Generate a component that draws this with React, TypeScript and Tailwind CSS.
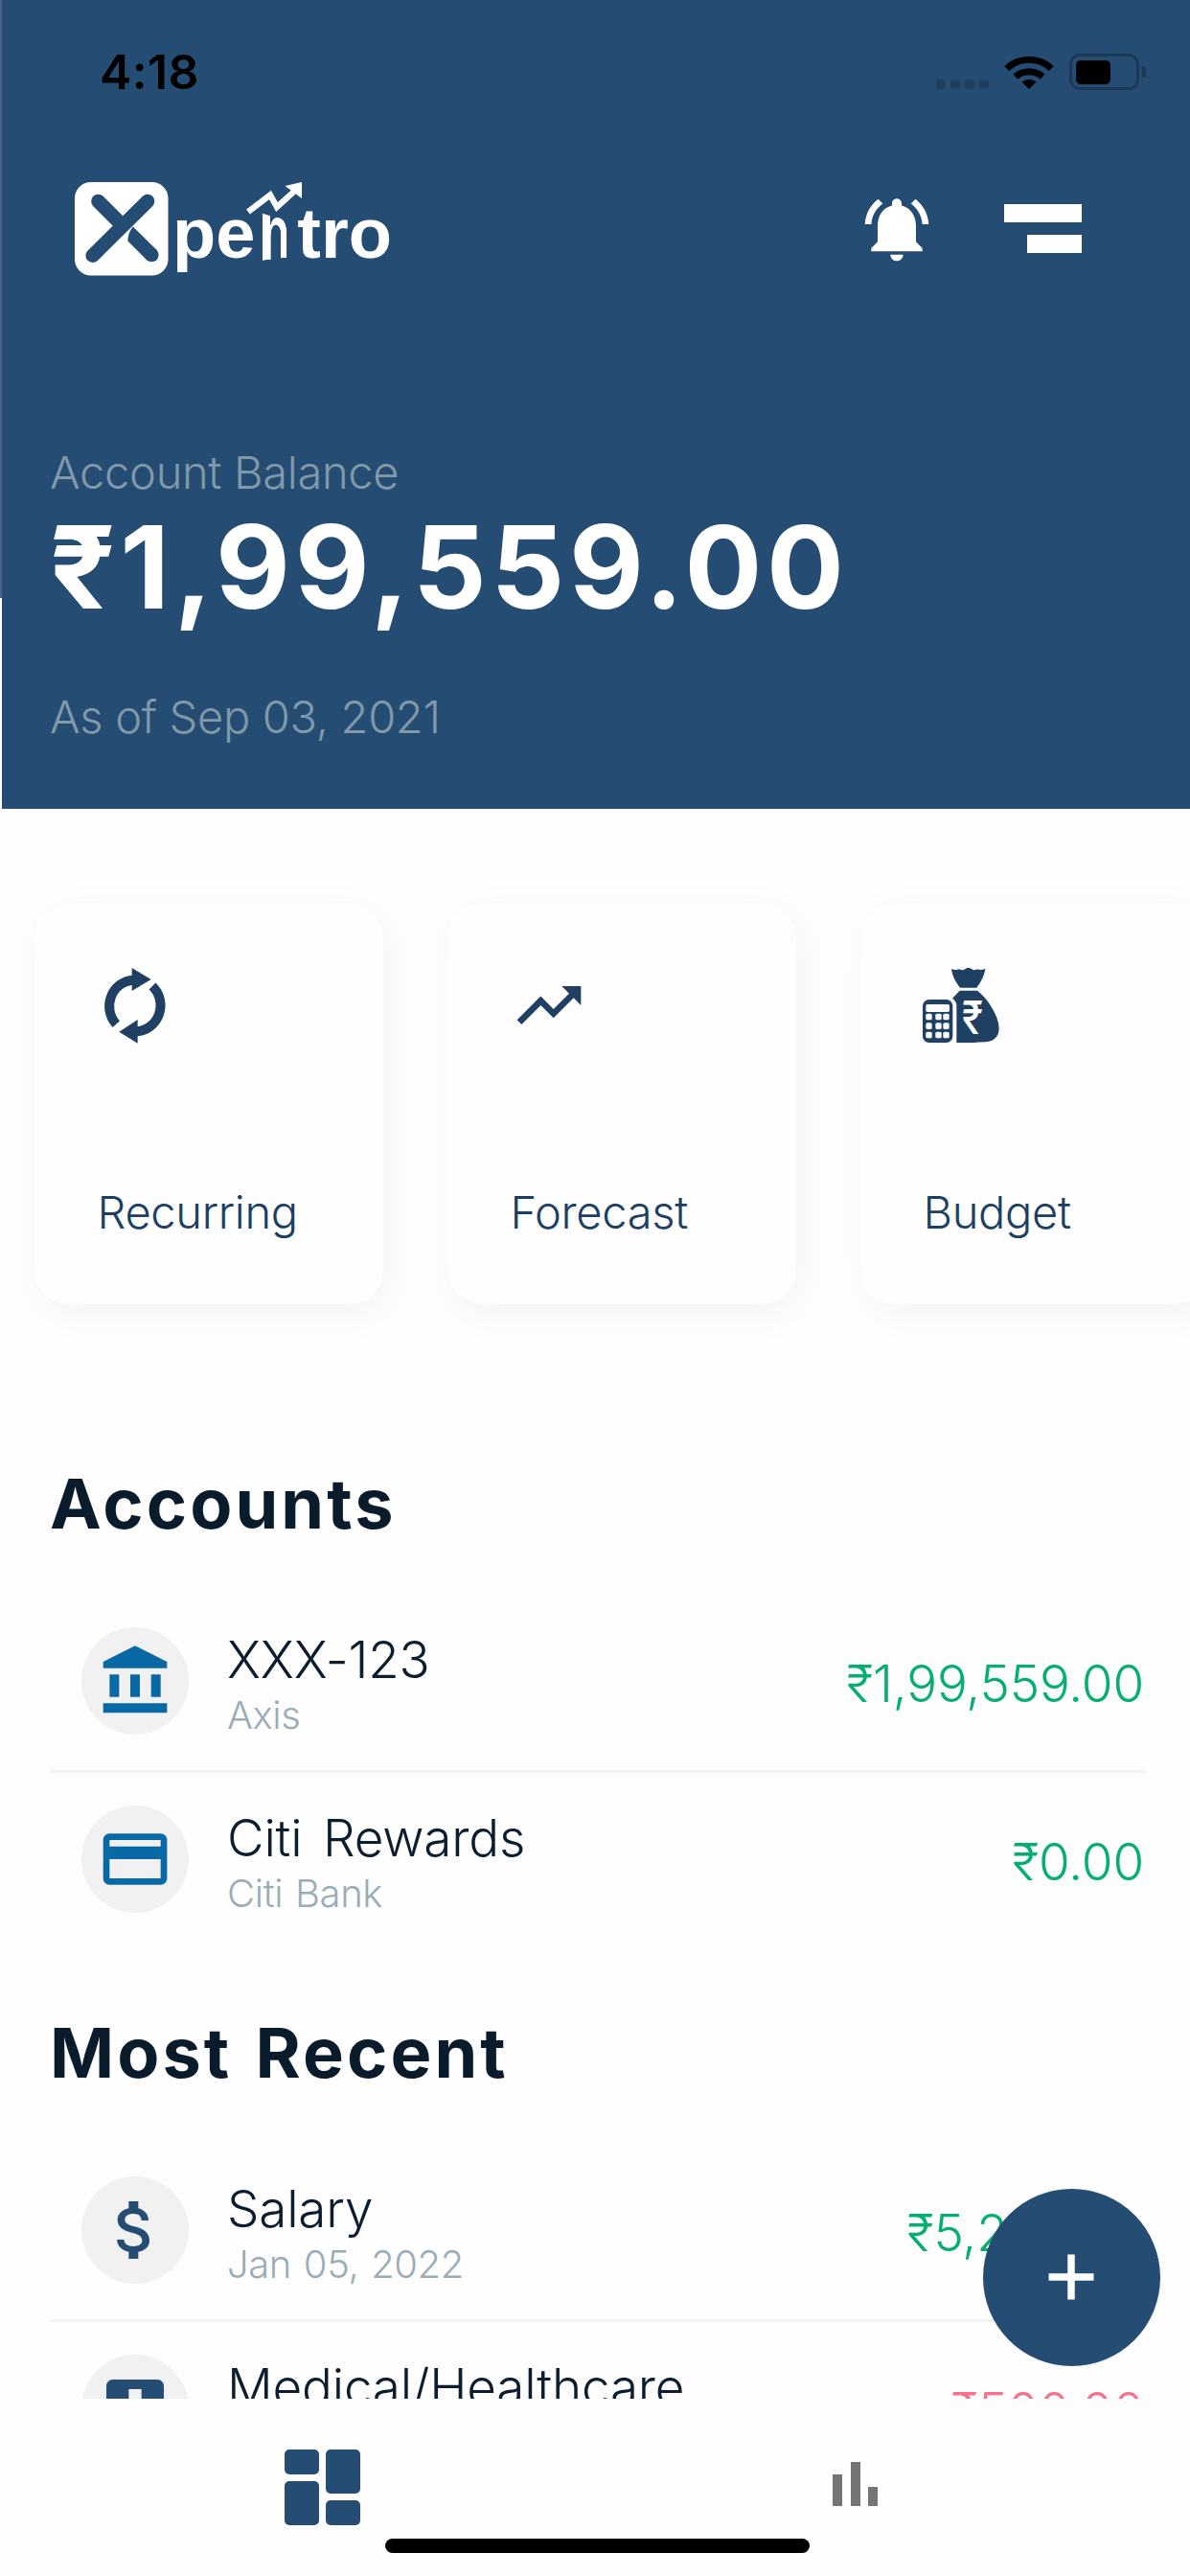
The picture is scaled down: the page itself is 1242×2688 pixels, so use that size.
import type { ReactNode } from "react";

const PATHS = {
  bell: "M7.58 4.08L6.15 2.65C3.75 4.48 2.17 7.3 2.03 10.5h2c.15-2.65 1.51-4.97 3.55-6.42zm12.39 6.42h2c-.15-3.2-1.73-6.02-4.12-7.85l-1.42 1.43c2.02 1.45 3.39 3.77 3.54 6.42zM18 11c0-3.07-1.64-5.64-4.5-6.32V4c0-.83-.67-1.5-1.5-1.5s-1.5.67-1.5 1.5v.68C7.63 5.36 6 7.92 6 11v5l-2 2v1h16v-1l-2-2v-5zm-6 11c.14 0 .27-.01.4-.04.65-.14 1.18-.58 1.44-1.18.1-.24.15-.5.15-.78h-4c.01 1.1.9 2 2.01 2z",
  trending: "M16 6l2.29 2.29-4.88 4.88-4-4L2 16.59 3.41 18l6-6 4 4 6.3-6.29L22 12V6z",
  bank: "M4 10h3v7H4zM10.5 10h3v7h-3zM2 19h20v3H2zM17 10h3v7h-3zM12 1L2 6v2h20V6z",
  card: "M20 4H4c-1.11 0-1.99.89-1.99 2L2 18c0 1.11.89 2 2 2h16c1.11 0 2-.89 2-2V6c0-1.11-.89-2-2-2zm0 14H4v-6h16v6zm0-10H4V6h16v2z",
  money: "M11.8 10.9c-2.27-.59-3-1.2-3-2.15 0-1.09 1.01-1.85 2.7-1.85 1.78 0 2.44.85 2.5 2.1h2.21c-.07-1.72-1.12-3.3-3.21-3.81V3h-3v2.16c-1.94.42-3.5 1.68-3.5 3.61 0 2.31 1.91 3.46 4.7 4.13 2.5.6 3 1.48 3 2.41 0 .69-.49 1.79-2.7 1.79-2.06 0-2.87-.92-2.98-2.1h-2.2c.12 2.19 1.76 3.42 3.68 3.83V21h3v-2.15c1.95-.37 3.5-1.5 3.5-3.55 0-2.84-2.43-3.81-4.7-4.4z",
  medical: "M19 3H5c-1.1 0-1.99.9-1.99 2L3 19c0 1.1.9 2 2 2h14c1.1 0 2-.9 2-2V5c0-1.1-.9-2-2-2zm-1 11h-4v4h-4v-4H6v-4h4V6h4v4h4v4z",
};

function Glyph({ d, className = "" }: { d: string; className?: string }) {
  return (
    <svg viewBox="0 0 24 24" className={`size-20 shrink-0 fill-current ${className}`}>
      <path d={d} />
    </svg>
  );
}

function RecurringIcon() {
  return (
    <svg viewBox="35 57 240 240" className="size-20 overflow-visible text-[#1f4063]">
      <g fill="none" stroke="currentColor" strokeWidth="30">
        <path d="M93 236A80 82 0 0 1 146 98" />
        <path d="M206 117A80 82 0 0 1 156 259" />
      </g>
      <path fill="currentColor" d="M142 60L202 96L142 132zM160 222L102 260L160 296z" />
    </svg>
  );
}

function BudgetIcon() {
  const keys = [203, 232, 260];
  const cols = [77, 107, 131];
  return (
    <svg viewBox="70 57 240 240" className="size-20 overflow-visible text-[#1f4063]">
      <path
        fill="currentColor"
        d="M157 63Q170 69 182 64Q192 70 199 64Q210 54 221 64Q229 70 238 64Q250 69 263 62Q260 90 236 122H184Q160 92 157 63z"
      />
      <path
        fill="currentColor"
        d="M183 131H238Q262 150 277 174Q306 218 306 250Q305 288 264 292Q220 295 173 294V176Q173 165 160 155z"
      />
      <text
        transform="translate(190 267) scale(.84 1)"
        fill="#fefefe"
        fontSize="143"
        className="font-[Inter] font-medium"
      >
        ₹
      </text>
      <rect x="67" y="159" width="94" height="135" rx="20" fill="currentColor" />
      <rect x="77" y="174" width="74" height="24" rx="5" fill="#fefefe" />
      {keys.map((y) =>
        cols.map((x) => <rect key={`${x}-${y}`} x={x} y={y} width="19" height="20" rx="5" fill="#fefefe" />),
      )}
    </svg>
  );
}

function Logo() {
  return (
    <div className="relative flex h-[98px] w-[332px] shrink-0">
      <svg viewBox="0 0 98 98" className="size-[98px]">
        <rect width="97.5" height="97.5" rx="17" fill="#fff" />
        <g stroke="#254d73" strokeWidth="14.6" fill="none">
          <path d="M24.5 20L48 43.5" strokeLinecap="round" />
          <path d="M76 20L18.7 76.7" strokeLinecap="round" />
        </g>
        <path d="M60.8 46.5Q55.8 52 55.3 61.4L75.1 81.2L85.5 70.8z" fill="#254d73" />
        <circle cx="80.3" cy="76" r="7.3" fill="#254d73" />
      </svg>
      <div className="absolute top-[12px] left-[102px] flex font-['Liberation_Sans'] text-[74px] leading-[84px] font-bold text-white">
        <span>pe</span>
        <span className="inline-block w-[46px] origin-[0_56px] translate-x-[3px] [transform:perspective(100px)_rotateY(40deg)_scale(1.3,1.3)]">
          n
        </span>
        <span className="-translate-x-[2px]">tro</span>
      </div>
      <svg viewBox="0 0 60 36" className="absolute top-0 left-[178px] h-9 w-[60px]">
        <path d="M3 31L26 13.5L33 26L54 7" fill="none" stroke="#fff" strokeWidth="6.2" />
        <path d="M41.5 4L59 0V17z" fill="#fff" />
      </svg>
    </div>
  );
}

function StatusBar() {
  return (
    <div className="flex h-[150px] items-center pr-[46px] pl-[104px] text-black">
      <span className="font-[Inter] text-[50px] font-semibold tracking-[0.4px]">4:18</span>
      <div className="ml-auto flex items-center">
        <div className="mt-[25px] mr-4 flex gap-[5px]">
          {[0, 1, 2, 3].map((i) => (
            <span key={i} className="size-2.5 rounded-[4px] bg-[#1f3f5e]" />
          ))}
        </div>
        <svg viewBox="0 0 52 36" className="h-9 w-[52px]">
          <g fill="none" stroke="#000" strokeWidth="7">
            <path d="M2.6 14.5A34 34 0 0 1 49.4 14.5" />
            <path d="M11.8 23.2A21.5 21.5 0 0 1 40.2 23.2" />
          </g>
          <path d="M18.5 28.5A11.5 11.5 0 0 1 33.5 28.5L26 36z" />
        </svg>
        <div className="ml-4 h-[38px] w-[73px] rounded-[11px] border-[3px] border-[#1b3854] p-[3.5px]">
          <div className="h-full w-9 rounded-[5px] bg-black" />
        </div>
        <span className="ml-[3px] h-3 w-1 rounded-r-full bg-[#1b3854]" />
      </div>
    </div>
  );
}

function ActionCard({ icon, label }: { icon: ReactNode; label: string }) {
  return (
    <div className="flex h-[418px] w-[364px] shrink-0 flex-col justify-between rounded-[36px] bg-[#fefefe] px-[66px] pt-[66px] pb-[68px] shadow-[6px_10px_44px_rgba(0,0,0,0.048)]">
      {icon}
      <span className="text-[47px] leading-[56px] font-light tracking-[-0.3px] text-[#1c4063]">{label}</span>
    </div>
  );
}

type Item = { icon: string; tint: string; title: string; sub: string; amount: string; color: string };

function Row({ item, divider }: { item: Item; divider?: boolean }) {
  return (
    <div
      className={`flex h-[186px] items-start border-b-[3px] pl-[33px] ${divider ? "border-[#f2f2f3]" : "border-transparent"}`}
    >
      <div className={`mt-[34px] flex size-28 shrink-0 items-center justify-center rounded-full bg-[#f1f1f1] ${item.tint}`}>
        <Glyph d={item.icon} />
      </div>
      <div className="mt-9 ml-10 flex flex-col">
        <span className="text-[53px] leading-[64px] font-light tracking-[-0.2px] text-[#0b1d2e] [word-spacing:7px]">
          {item.title}
        </span>
        <span className="text-[40px] leading-[52px] font-light tracking-[-0.4px] text-[#9aadb7] [word-spacing:2px]">
          {item.sub}
        </span>
      </div>
      <span className={`mt-[61px] ml-auto text-[53px] leading-[64px] font-light tracking-[-0.15px] ${item.color}`}>
        {item.amount}
      </span>
    </div>
  );
}

const accounts: Item[] = [
  { icon: PATHS.bank, tint: "text-[#0869a5]", title: "XXX-123", sub: "Axis", amount: "₹1,99,559.00", color: "text-[#06ae70]" },
  { icon: PATHS.card, tint: "text-[#0869a5]", title: "Citi Rewards", sub: "Citi Bank", amount: "₹0.00", color: "text-[#06ae70]" },
];
const recent: Item[] = [
  { icon: PATHS.money, tint: "text-[#254d73]", title: "Salary", sub: "Jan 05, 2022", amount: "₹5,200.00", color: "text-[#06ae70]" },
  { icon: PATHS.medical, tint: "text-[#254d73]", title: "Medical/Healthcare", sub: "Jan 05, 2022", amount: "₹500.00", color: "text-[#f9708f]" },
];

function Section({ title, items, className }: { title: string; items: Item[]; className: string }) {
  return (
    <section className={`mr-12 ml-[52px] ${className}`}>
      <h2 className="mb-[51px] text-[72px] leading-[88px] font-bold tracking-[3.1px] text-[#0a1c2b] [word-spacing:4px]">
        {title}
      </h2>
      {items.map((item, i) => (
        <Row key={item.title} item={item} divider={i === 0} />
      ))}
    </section>
  );
}

export default function App() {
  return (
    <div className="relative flex h-[2688px] w-[1242px] flex-col overflow-hidden bg-[#fefefe] font-[Inter,sans-serif]">
      <header className="h-[844px] shrink-0 bg-[#254d73]">
        <StatusBar />
        <div className="flex h-[177px] items-center pr-[113px] pl-[78px]">
          <Logo />
          <Glyph d={PATHS.bell} className="ml-auto text-white" />
          <div className="ml-[72px] flex flex-col items-end gap-[13px]">
            <span className="h-[19px] w-[81px] bg-white" />
            <span className="h-[19px] w-[57px] bg-white" />
          </div>
        </div>
        <div className="flex flex-col pt-[138px] pl-[52px]">
          <span className="text-[47px] leading-[56px] font-light tracking-[-0.3px] text-[#8199a9]">Account Balance</span>
          <span className="mt-px text-[120px] leading-[140px] font-bold tracking-[4.75px] text-white">₹1,99,559.00</span>
          <span className="mt-[58px] text-[47px] leading-[56px] font-light tracking-[-0.3px] text-[#8199a9]">
            As of Sep 03, 2021
          </span>
        </div>
      </header>

      <main className="h-[1658.5px] shrink-0 overflow-hidden">
        <div className="flex gap-[67px] pt-[99px] pl-[35.5px]">
          <ActionCard icon={<RecurringIcon />} label="Recurring" />
          <ActionCard icon={<Glyph d={PATHS.trending} className="text-[#1f4063]" />} label="Forecast" />
          <ActionCard icon={<BudgetIcon />} label="Budget" />
        </div>
        <Section title="Accounts" items={accounts} className="mt-[164px]" />
        <Section title="Most Recent" items={recent} className="mt-[62px]" />
      </main>

      <nav className="flex flex-1 flex-col bg-[#fefefe]">
        <div className="flex pt-[53px] pl-[297px]">
          <div className="flex gap-[7px]">
            <div className="flex w-9 flex-col gap-[7px]">
              <span className="h-[26px] rounded-[5px] bg-[#254d73]" />
              <span className="h-[46px] rounded-[5px] bg-[#254d73]" />
            </div>
            <div className="flex w-9 flex-col gap-[7px]">
              <span className="h-[46px] rounded-[5px] bg-[#254d73]" />
              <span className="h-[26px] rounded-[5px] bg-[#254d73]" />
            </div>
          </div>
          <div className="mt-[13px] ml-[493px] flex h-[46px] items-end gap-[8.5px]">
            <span className="h-[33px] w-2.5 bg-[#757575]" />
            <span className="h-[46px] w-2.5 bg-[#757575]" />
            <span className="h-5 w-2.5 bg-[#757575]" />
          </div>
        </div>
        <span className="mx-auto mt-auto mb-[24.5px] h-[14.5px] w-[443px] translate-x-[2px] rounded-full bg-black" />
      </nav>

      <button
        aria-label="Add"
        className="absolute top-[2283.5px] left-[1025.5px] flex size-[185.5px] items-center justify-center rounded-full bg-[#254d73]"
      >
        <svg viewBox="0 0 48 48" className="size-12">
          <path d="M24 .5V47.5M.5 24H47.5" stroke="#fff" strokeWidth="7.5" />
        </svg>
      </button>
      <div className="absolute top-0 left-0 h-[624px] w-[1.5px] bg-[#47658a]" />
      <div className="absolute top-[624px] left-0 h-[220px] w-[2px] bg-[#fefefe]" />
    </div>
  );
}
